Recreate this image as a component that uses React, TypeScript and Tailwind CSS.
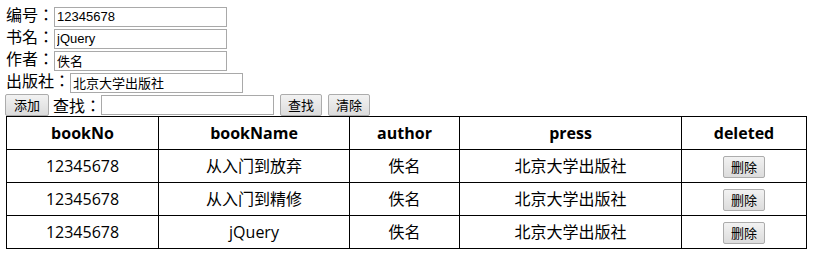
import React from "react";

const rows = [
  { no: "12345678", name: "从入门到放弃", author: "佚名", press: "北京大学出版社" },
  { no: "12345678", name: "从入门到精修", author: "佚名", press: "北京大学出版社" },
  { no: "12345678", name: "jQuery", author: "佚名", press: "北京大学出版社" },
];

const font = "font-['Open_Sans','Noto_Sans_CJK_SC',sans-serif]";
const labelFont = "font-['Noto_Sans_CJK_JP',sans-serif]";
const inputCls =
  "h-[20px] w-[173px] border border-[#a9a9a9] bg-white px-[2px] align-middle text-[13px] leading-[18px] text-black font-['Liberation_Sans','Noto_Sans_CJK_SC',sans-serif] outline-none";
const btnCls =
  "h-[22px] rounded-[2px] border border-[#acacac] bg-gradient-to-b from-[#f2f2f2] to-[#dcdcdc] px-[7px] align-middle text-[13px] leading-[18px] text-black font-['Noto_Sans_CJK_SC',sans-serif]";

const Field = ({ label, value }: { label: string; value: string }) => (
  <div className="h-[22px] leading-[22px]">
    <span className={labelFont}>{label}</span>
    <input className={inputCls} defaultValue={value} readOnly />
  </div>
);

export default function App() {
  return (
    <div className={`${font} bg-white pl-[6px] pt-[3px] text-[16px] text-black`}>
      <Field label="编号：" value="12345678" />
      <Field label="书名：" value="jQuery" />
      <Field label="作者：" value="佚名" />
      <Field label="出版社：" value="北京大学出版社" />
      <div className="flex h-[25px] items-end">
        <button className={`${btnCls} -ml-[1px] border-[#3c7fb1] from-[#eaf6fd] to-[#bee6fd] px-[8px]`}>添加</button>
        <span className={`${labelFont} ml-[4px] leading-[22px]`}>查找：</span>
        <input className={`${inputCls} mb-[1px]`} />
        <button className={`${btnCls} ml-[6px]`}>查找</button>
        <button className={`${btnCls} ml-[6px]`}>清除</button>
      </div>
      <table className="w-[800px] table-fixed border-collapse border border-black text-center">
        <colgroup>
          <col className="w-[152px]" />
          <col className="w-[191px]" />
          <col className="w-[110px]" />
          <col className="w-[222px]" />
          <col className="w-[125px]" />
        </colgroup>
        <thead>
          <tr className="h-[33px]">
            {["bookNo", "bookName", "author", "press", "deleted"].map((h) => (
              <th key={h} className="border border-black font-bold">
                {h}
              </th>
            ))}
          </tr>
        </thead>
        <tbody>
          {rows.map((r, i) => (
            <tr key={i} className="h-[33px]">
              <td className="border border-black">{r.no}</td>
              <td className="border border-black">{r.name}</td>
              <td className="border border-black">{r.author}</td>
              <td className="border border-black">{r.press}</td>
              <td className="border border-black">
                <button className={`${btnCls} text-[12px]`}>删除</button>
              </td>
            </tr>
          ))}
        </tbody>
      </table>
    </div>
  );
}
